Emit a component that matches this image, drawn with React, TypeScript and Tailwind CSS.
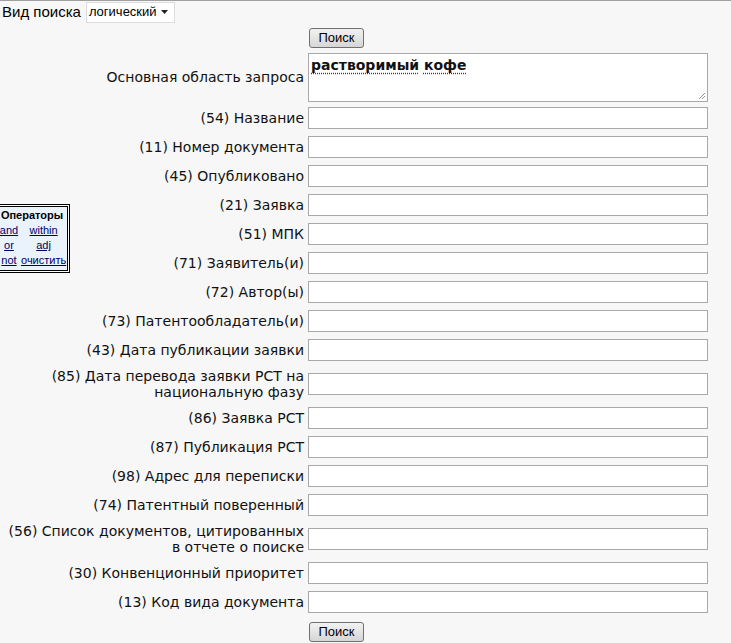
import React from 'react';

const fields: { label: React.ReactNode; two?: boolean }[] = [
  { label: '(54) Название' },
  { label: '(11) Номер документа' },
  { label: '(45) Опубликовано' },
  { label: '(21) Заявка' },
  { label: '(51) МПК' },
  { label: '(71) Заявитель(и)' },
  { label: '(72) Автор(ы)' },
  { label: '(73) Патентообладатель(и)' },
  { label: '(43) Дата публикации заявки' },
  { label: <>(85) Дата перевода заявки PCT на<br />национальную фазу</>, two: true },
  { label: '(86) Заявка PCT' },
  { label: '(87) Публикация PCT' },
  { label: '(98) Адрес для переписки' },
  { label: '(74) Патентный поверенный' },
  { label: <>(56) Список документов, цитированных<br />в отчете о поиске</>, two: true },
  { label: '(30) Конвенционный приоритет' },
  { label: '(13) Код вида документа' },
];

function SearchButton() {
  return (
    <button className="h-[20px] w-[55px] rounded-[3px] border border-[#707070] bg-gradient-to-b from-[#f2f2f2] to-[#d6d6d6] text-[13px] leading-none text-black [font-family:'Liberation_Sans',Arial,sans-serif]">
      Поиск
    </button>
  );
}

function Operators() {
  const link = 'text-[#000066] underline';
  return (
    <div className="absolute left-[-6px] top-[203px] w-[76px] border-[3px] border-double border-black bg-white">
      <div className="bg-[#eaf2fb] px-[1px] pb-[2px] pt-[1px] text-center text-[11px] leading-[15px] text-black [font-family:'Liberation_Sans',Arial,sans-serif]">
        <div className="font-bold">Операторы</div>
        <div className="grid grid-cols-[22px_1fr] gap-x-[1px] text-center">
          <a className={link}>and</a>
          <a className={link}>within</a>
          <a className={link}>or</a>
          <a className={link}>adj</a>
          <a className={link}>not</a>
          <a className={link}>очистить</a>
        </div>
      </div>
    </div>
  );
}

export default function App() {
  return (
    <div className="relative min-h-[643px] w-[731px] overflow-hidden border-t border-[#a0a0a0] bg-[#f7f7f7] text-black">
      <div className="flex h-[22px] items-center pl-[2px] [font-family:'Liberation_Sans',Arial,sans-serif]">
        <span className="text-[15px]">Вид поиска</span>
        <div className="ml-[5px] flex h-[21px] w-[89px] items-center justify-between border border-[#dcdcdc] bg-white pl-[2px] pr-[6px] text-[13px]">
          <span>логический</span>
          <svg width="7" height="4" viewBox="0 0 7 4"><path d="M0 0h7L3.5 4z" fill="#222" /></svg>
        </div>
      </div>

      <Operators />

      <div className="mt-[4px] grid grid-cols-[298px_400px] items-center gap-x-[4px] gap-y-[7px] pl-[6px] text-[14px] [font-family:'DejaVu_Sans',Verdana,sans-serif] text-[#111]">
        <div />
        <div className="pl-[1px]"><SearchButton /></div>

        <div className="text-right">Основная область запроса</div>
        <div className="relative -mb-[2px] -mt-[2px] h-[49px] border border-[#a9a9a9] bg-white px-[2px] pt-[1px] text-[14px] font-bold">
          <span className="underline decoration-dotted decoration-[#c00000] underline-offset-[3px]">растворимый</span>{' '}
          <span className="underline decoration-dotted decoration-[#c00000] underline-offset-[3px]">кофе</span>
          <svg className="absolute bottom-[1px] right-[1px]" width="8" height="8" viewBox="0 0 8 8">
            <path d="M7 1L1 7M7 4L4 7" stroke="#999" strokeWidth="1" />
          </svg>
        </div>

        {fields.map((f, i) => (
          <React.Fragment key={i}>
            <div className="text-right leading-[16px]">{f.label}</div>
            <div className="h-[22px] border border-[#a9a9a9] bg-white" />
          </React.Fragment>
        ))}

        <div />
        <div className="mt-[1px] pl-[1px]"><SearchButton /></div>
      </div>
    </div>
  );
}
